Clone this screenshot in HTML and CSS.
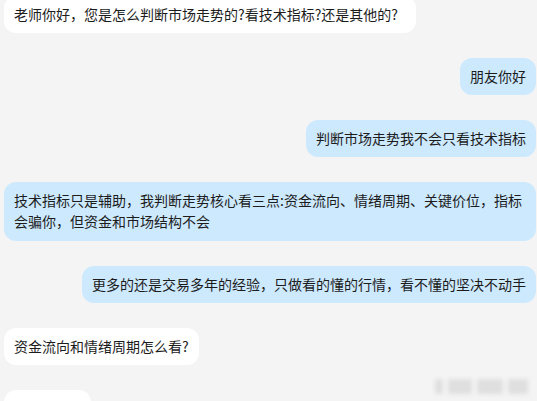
FILE: index.html
```html
<!DOCTYPE html>
<html lang="zh-CN">
<head>
    <meta charset="UTF-8">
    <title>聊天记录</title>
    <link rel="stylesheet" href="styles.css">
</head>
<body>

<!-- 对话列表 -->
<div class="chat">
    <div class="msg left"><div class="bubble white first">老师你好，您是怎么判断市场走势的?看技术指标?还是其他的?</div></div>
    <div class="msg right"><div class="bubble blue">朋友你好</div></div>
    <div class="msg right"><div class="bubble blue">判断市场走势我不会只看技术指标</div></div>
    <div class="msg left"><div class="bubble blue wide">技术指标只是辅助，我判断走势核心看三点:资金流向、情绪周期、关键价位，指标会骗你，但资金和市场结构不会</div></div>
    <div class="msg right"><div class="bubble blue">更多的还是交易多年的经验，只做看的懂的行情，看不懂的坚决不动手</div></div>
    <div class="msg left"><div class="bubble white">资金流向和情绪周期怎么看?</div></div>
    <div class="msg left"><div class="bubble white stub">&nbsp;</div></div>
</div>

<!-- 水印 -->
<div class="mark">
    <span class="m1"></span><span class="m2"></span><span class="m3"></span><span class="m4"></span>
</div>

</body>
</html>
```

FILE: styles.css
```css
html, body {
    overflow: hidden;
}

body {
    font-family: "Noto Sans CJK SC", "Noto Sans", sans-serif;
    background-color: #f4f4f4;
    margin: 0;
    padding: 0;
    height: 401px;
    position: relative;
    color: #1c1c1c;
}

.chat {
    display: flex;
    flex-direction: column;
    gap: 25px;
    padding: 0 1px 0 4px;
    margin-top: -4px;
    height: 405px;
    overflow: hidden;
}

.msg {
    display: flex;
    flex-shrink: 0;
}

.msg.left {
    justify-content: flex-start;
}

.msg.right {
    justify-content: flex-end;
}

.bubble {
    font-size: 14px;
    line-height: 21px;
    padding: 8px 10px;
    border-radius: 12px;
}

.bubble.first {
    padding-right: 18px;
}

.bubble.wide {
    flex: 1;
    padding: 8px 10px 9px;
}

.white {
    background-color: #ffffff;
}

.blue {
    background-color: #cde9fe;
}

.stub {
    width: 67px;
}

.mark {
    position: absolute;
    right: 9px;
    bottom: 7px;
    display: flex;
    gap: 5px;
    align-items: center;
    filter: blur(2px);
    opacity: 0.8;
}

.mark span {
    display: block;
    height: 15px;
    background-color: #dadada;
}

.m1 { width: 8px; }
.m2 { width: 24px; }
.m3 { width: 26px; }
.m4 { width: 20px; }
```
